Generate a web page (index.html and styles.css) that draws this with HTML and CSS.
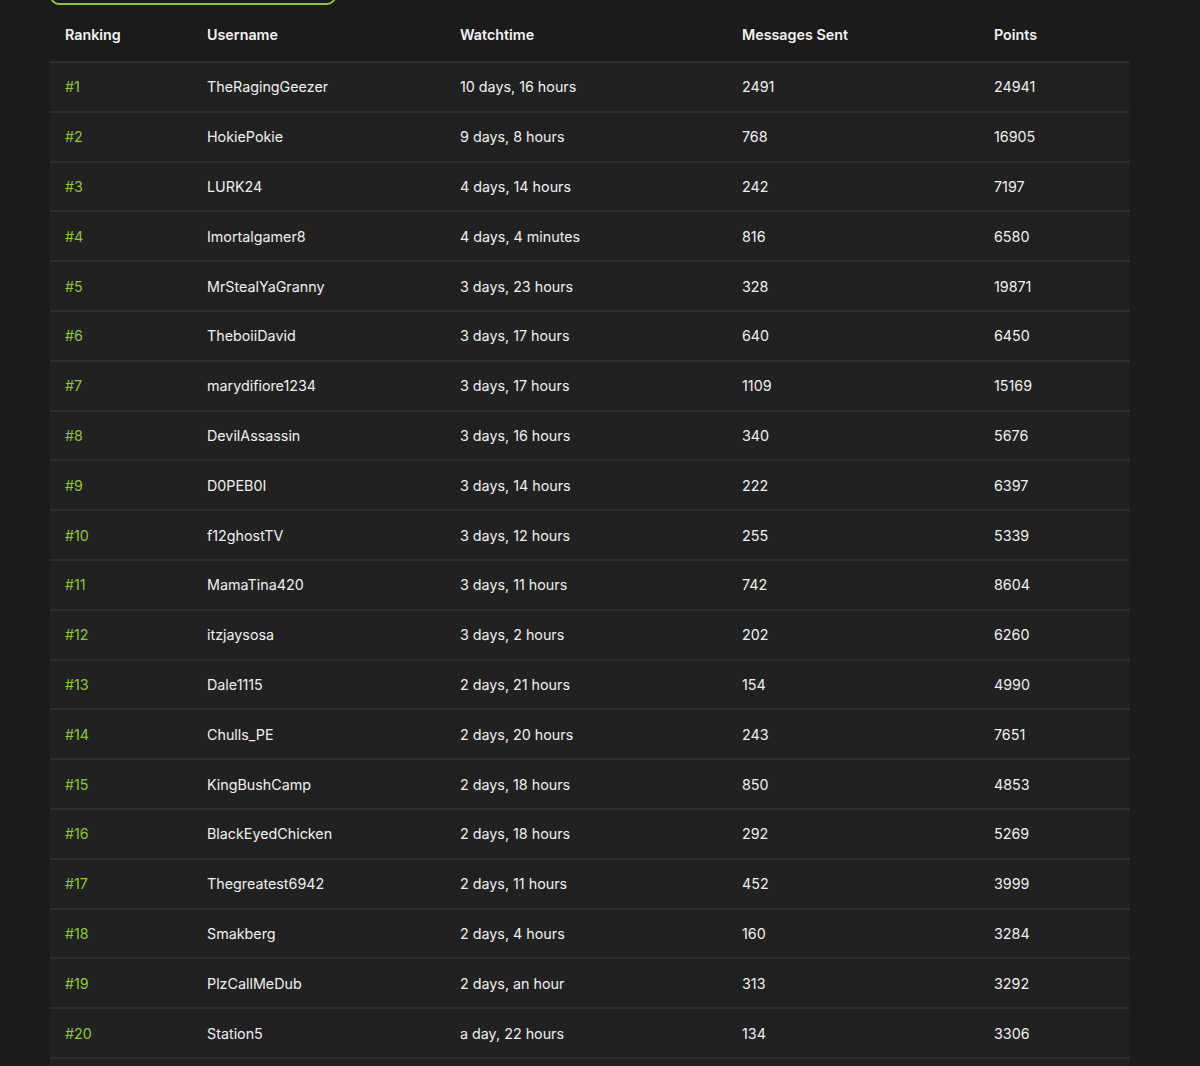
FILE: index.html
```html
<!DOCTYPE html>
<html>
<head>
<meta charset="utf-8">
<link rel="stylesheet" href="styles.css">
</head>
<body>
<div class="page">
  <div class="tab-button"></div>
  <table class="board">
    <thead>
      <tr><th class="c-rank">Ranking</th><th class="c-user">Username</th><th class="c-watch">Watchtime</th><th class="c-msg">Messages Sent</th><th class="c-pts">Points</th></tr>
    </thead>
    <tbody>
      <tr><td class="rank">#1</td><td>TheRagingGeezer</td><td>10 days, 16 hours</td><td>2491</td><td>24941</td></tr>
      <tr><td class="rank">#2</td><td>HokiePokie</td><td>9 days, 8 hours</td><td>768</td><td>16905</td></tr>
      <tr><td class="rank">#3</td><td>LURK24</td><td>4 days, 14 hours</td><td>242</td><td>7197</td></tr>
      <tr><td class="rank">#4</td><td>Imortalgamer8</td><td>4 days, 4 minutes</td><td>816</td><td>6580</td></tr>
      <tr><td class="rank">#5</td><td>MrStealYaGranny</td><td>3 days, 23 hours</td><td>328</td><td>19871</td></tr>
      <tr><td class="rank">#6</td><td>TheboiiDavid</td><td>3 days, 17 hours</td><td>640</td><td>6450</td></tr>
      <tr><td class="rank">#7</td><td>marydifiore1234</td><td>3 days, 17 hours</td><td>1109</td><td>15169</td></tr>
      <tr><td class="rank">#8</td><td>DevilAssassin</td><td>3 days, 16 hours</td><td>340</td><td>5676</td></tr>
      <tr><td class="rank">#9</td><td>D0PEB0I</td><td>3 days, 14 hours</td><td>222</td><td>6397</td></tr>
      <tr><td class="rank">#10</td><td>f12ghostTV</td><td>3 days, 12 hours</td><td>255</td><td>5339</td></tr>
      <tr><td class="rank">#11</td><td>MamaTina420</td><td>3 days, 11 hours</td><td>742</td><td>8604</td></tr>
      <tr><td class="rank">#12</td><td>itzjaysosa</td><td>3 days, 2 hours</td><td>202</td><td>6260</td></tr>
      <tr><td class="rank">#13</td><td>Dale1115</td><td>2 days, 21 hours</td><td>154</td><td>4990</td></tr>
      <tr><td class="rank">#14</td><td>Chulls_PE</td><td>2 days, 20 hours</td><td>243</td><td>7651</td></tr>
      <tr><td class="rank">#15</td><td>KingBushCamp</td><td>2 days, 18 hours</td><td>850</td><td>4853</td></tr>
      <tr><td class="rank">#16</td><td>BlackEyedChicken</td><td>2 days, 18 hours</td><td>292</td><td>5269</td></tr>
      <tr><td class="rank">#17</td><td>Thegreatest6942</td><td>2 days, 11 hours</td><td>452</td><td>3999</td></tr>
      <tr><td class="rank">#18</td><td>Smakberg</td><td>2 days, 4 hours</td><td>160</td><td>3284</td></tr>
      <tr><td class="rank">#19</td><td>PlzCallMeDub</td><td>2 days, an hour</td><td>313</td><td>3292</td></tr>
      <tr><td class="rank">#20</td><td>Station5</td><td>a day, 22 hours</td><td>134</td><td>3306</td></tr>
      <tr><td></td><td></td><td></td><td></td><td></td></tr>
    </tbody>
  </table>
</div>
</body>
</html>
```

FILE: styles.css
```css
html, body {
  margin: 0;
  padding: 0;
  background: #1b1b1b;
  height: 100%;
  overflow: hidden;
}
.page {
  padding: 0 70px 0 50px;
  font-family: Inter, "Open Sans", "Liberation Sans", sans-serif;
  color: #f2f2f2;
}
.tab-button {
  width: 286px;
  height: 35px;
  margin-top: -30px;
  border: 2px solid #8cc63f;
  border-radius: 9px;
  box-sizing: border-box;
}
.board {
  width: 1080px;
  table-layout: fixed;
  border-collapse: collapse;
  margin-top: 2px;
  font-size: 14.3px;
}
.board th {
  text-align: left;
  font-weight: 600;
  height: 54px;
  padding: 0 0 0 15px;
  color: #f4f4f4;
}
.board td {
  padding: 0 0 0 15px;
  height: 47.8px;
  border-top: 2px solid #2e2e2e;
  background: #212121;
  font-weight: 400;
  color: #f0f0f0;
}
.board td.rank {
  color: #8cc63f;
}
.c-rank { width: 127px; }
.c-user { width: 238px; }
.c-watch { width: 267px; }
.c-msg { width: 237px; }
.c-pts { width: 136px; }
```
